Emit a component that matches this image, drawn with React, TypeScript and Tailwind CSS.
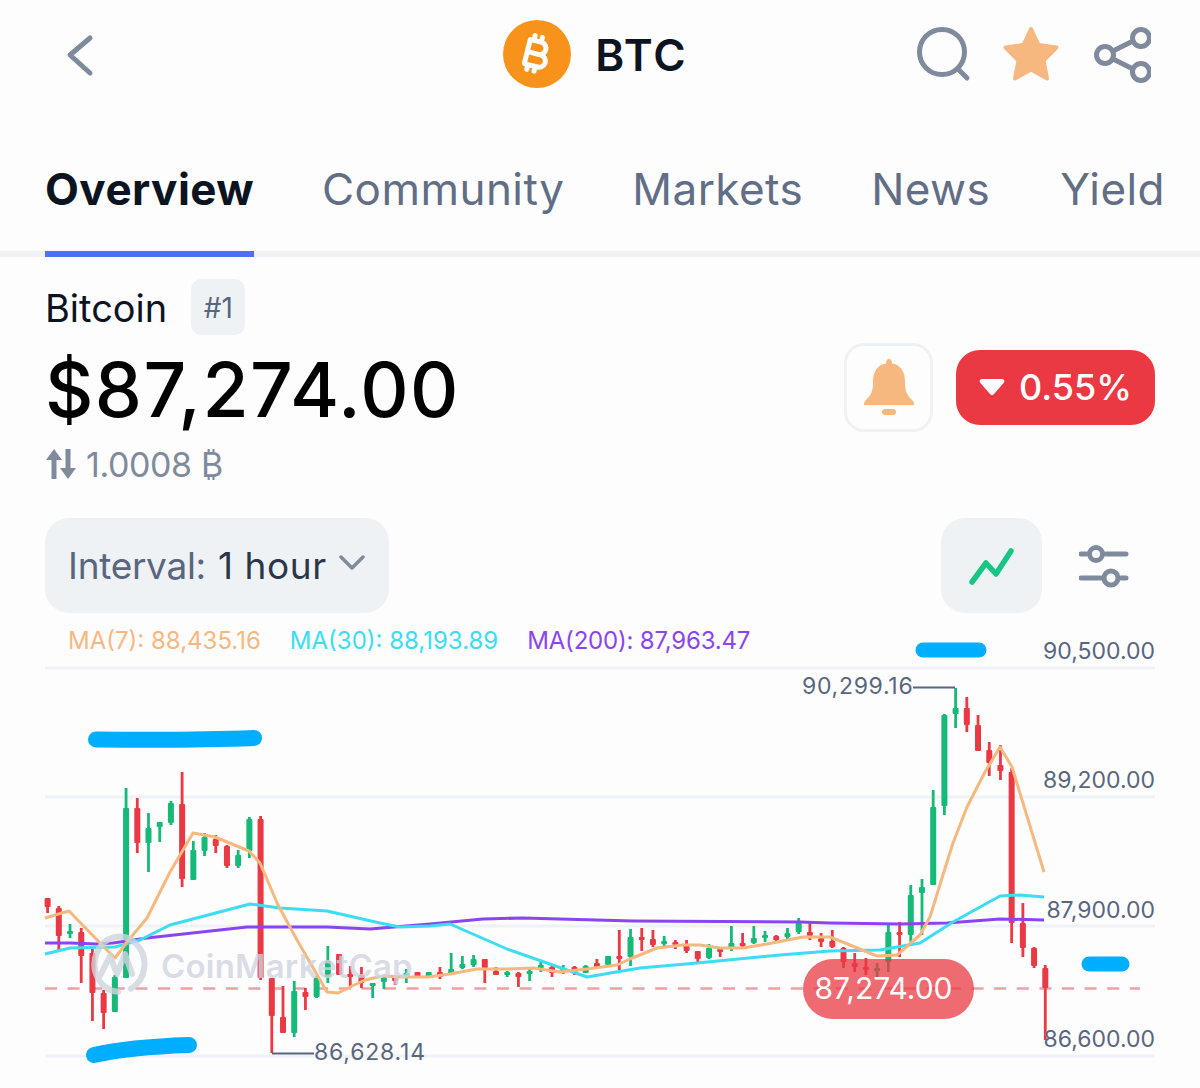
import { FaBitcoinSign } from "react-icons/fa6";

// color, wick top, body top, body bottom, wick bottom (y in page px)
type Candle = ["g" | "r", number, number, number, number];

const candles: Candle[] = [
  ["r", 898, 898, 907, 913], ["r", 906, 908, 936, 950], ["g", 924, 931, 934, 938], ["r", 928, 932, 956, 983],
  ["r", 948, 953, 993, 1021], ["r", 990, 993, 1013, 1029], ["g", 975, 977, 1012, 1012], ["g", 788, 808, 978, 978],
  ["r", 798, 808, 843, 853], ["g", 813, 828, 843, 872], ["g", 822, 822, 827, 842], ["g", 801, 803, 823, 825],
  ["r", 772, 804, 879, 887], ["g", 841, 850, 880, 880], ["g", 833, 837, 851, 856], ["r", 835, 839, 846, 853],
  ["r", 845, 846, 866, 868], ["g", 850, 855, 866, 868], ["g", 817, 819, 851, 858], ["r", 816, 819, 978, 980],
  ["r", 978, 978, 1016, 1053], ["r", 986, 1017, 1033, 1033], ["g", 981, 991, 1033, 1037], ["r", 988, 992, 997, 1010],
  ["g", 976, 978, 997, 998], ["g", 946, 961, 977, 983], ["r", 954, 954, 975, 975], ["r", 966, 974, 977, 988],
  ["r", 967, 975, 983, 988], ["g", 983, 983, 985, 998], ["g", 975, 977, 982, 989], ["r", 975, 977, 981, 985],
  ["g", 969, 973, 977, 983], ["r", 972, 972, 977, 977], ["g", 972, 972, 977, 977], ["r", 967, 972, 977, 979],
  ["g", 953, 969, 975, 975], ["g", 956, 964, 968, 969], ["g", 955, 959, 965, 967], ["r", 959, 959, 968, 983],
  ["r", 967, 971, 975, 975], ["g", 971, 972, 975, 977], ["r", 972, 973, 977, 987], ["g", 968, 971, 973, 981],
  ["g", 962, 965, 968, 972], ["r", 966, 967, 973, 977], ["g", 965, 968, 971, 974], ["r", 966, 967, 972, 975],
  ["g", 965, 966, 973, 973], ["r", 959, 963, 967, 967], ["g", 956, 956, 965, 966], ["r", 930, 956, 959, 970],
  ["g", 929, 937, 957, 966], ["r", 928, 937, 940, 951], ["r", 930, 939, 945, 947], ["g", 936, 941, 944, 947],
  ["r", 940, 942, 945, 949], ["r", 940, 946, 951, 953], ["r", 951, 951, 959, 963], ["g", 944, 948, 958, 959],
  ["r", 948, 949, 952, 957], ["g", 926, 943, 948, 951], ["r", 933, 943, 946, 948], ["g", 926, 938, 943, 944],
  ["g", 931, 935, 938, 942], ["r", 935, 936, 940, 942], ["g", 928, 933, 937, 940], ["g", 918, 923, 932, 934],
  ["r", 923, 932, 936, 940], ["r", 933, 938, 942, 947], ["r", 930, 941, 947, 948], ["r", 947, 948, 962, 968],
  ["r", 953, 963, 967, 972], ["r", 958, 967, 970, 975], ["g", 963, 968, 970, 977], ["g", 925, 932, 962, 972],
  ["r", 922, 932, 935, 957], ["g", 885, 895, 935, 942], ["g", 879, 887, 893, 935], ["g", 790, 807, 885, 885],
  ["g", 714, 715, 806, 815], ["g", 688, 708, 714, 728], ["r", 697, 708, 725, 732], ["r", 715, 725, 751, 751],
  ["r", 742, 750, 763, 776], ["r", 745, 765, 771, 780], ["r", 768, 772, 923, 943], ["r", 903, 923, 948, 957],
  ["r", 947, 948, 966, 968], ["r", 965, 968, 988, 1040],
];

const ma7 =
  "45,918 69,911 100,943 115,958 127,942 147,918 170,872 193,833 215,837 249,851 260,863 278,905 297,940 327,992 338,993 350,987 365,980 383,976 403,977 428,977 450,974 477,969 507,969 533,968 560,972 587,969 617,965 630,959 657,948 683,945 700,945 720,948 743,948 767,944 803,937 830,937 850,945 877,956 897,955 920,935 930,917 942,878 953,843 967,807 985,772 1000,747 1012,767 1044,872";
const ma30 =
  "45,954 70,948 115,947 140,940 170,925 250,904 280,908 327,911 380,923 400,927 430,926 450,924 507,949 587,977 640,968 697,963 780,955 830,951 880,950 920,943 953,922 1000,896 1020,895 1044,897";
const ma200 =
  "45,943 70,943 97,944 113,943 147,938 247,927 327,927 370,929 430,924 483,919 523,918 633,921 800,922 830,923 900,924 947,923 1000,919 1044,920";

function Chart() {
  return (
    <div className="relative h-[435px]">
      <svg width="1200" height="435" viewBox="0 653 1200 435" className="absolute inset-0 overflow-visible">
        {[668, 797, 926, 1056].map((y) => (
          <line key={y} x1="45" x2="1155" y1={y} y2={y} stroke="#eff2f5" strokeWidth="3" />
        ))}
        <line x1="45" x2="1140" y1="988.5" y2="988.5" stroke="#f19ea3" strokeWidth="2.5" strokeDasharray="12 10.6" />
        {candles.map(([c, wt, bt, bb, wb], i) => {
          const x = 47.6 + i * 11.21;
          const color = c === "g" ? "#16ba78" : "#ea3943";
          return (
            <g key={i} fill={color}>
              <rect x={x - 1.4} y={wt} width="2.8" height={wb - wt} />
              <rect x={x - 3} y={bt} width="6" height={Math.max(bb - bt, 3)} rx="1" />
            </g>
          );
        })}
        <polyline points={ma200} fill="none" stroke="#8b45f0" strokeWidth="3" strokeLinejoin="round" />
        <polyline points={ma30} fill="none" stroke="#3cdcf2" strokeWidth="3" strokeLinejoin="round" />
        <polyline points={ma7} fill="none" stroke="#f6b87e" strokeWidth="3" strokeLinejoin="round" />
        <path d="M913 687.5H955M272 1053.5H314" stroke="#58667e" strokeWidth="2" fill="none" />
        {/* watermark logo */}
        <g fill="none" stroke="#cfd4de" strokeWidth="6" opacity="0.8" strokeLinecap="round" strokeLinejoin="round">
          <path d="M137 985a25 27 0 1 0-13 3" transform="translate(-6 -16) scale(1 1.02)" />
          <path d="M100 976l10-20 7 18 8-20 7 20" />
        </g>
        {/* blue scribbles */}
        <path d="M96 739.5C150 740 205 740 254 738" stroke="#00aeff" strokeWidth="16" strokeLinecap="round" fill="none" />
        <path d="M94 1055C125 1048 160 1046 189 1045" stroke="#00aeff" strokeWidth="16" strokeLinecap="round" fill="none" />
        <path d="M923 650H979" stroke="#00aeff" strokeWidth="15" strokeLinecap="round" />
        <path d="M1089 964H1122" stroke="#00aeff" strokeWidth="15" strokeLinecap="round" />
      </svg>

      <span className="absolute left-[161px] top-[291px] text-[33px] font-semibold leading-[44px] tracking-[0.2px] text-[#cfd4de]/80">
        CoinMarketCap
      </span>
      <span className="absolute left-[802px] top-[18px] text-[23px] leading-[30px] tracking-[0.7px] text-[#58667e]">90,299.16</span>
      <span className="absolute left-[314px] top-[384px] text-[23px] leading-[30px] tracking-[0.8px] text-[#58667e]">86,628.14</span>
      {[
        ["90,500.00", "top-[-17px]"],
        ["89,200.00", "top-[112px]"],
        ["87,900.00", "top-[242px]"],
        ["86,600.00", "top-[371px]"],
      ].map(([label, pos]) => (
        <span key={label} className={`absolute right-[45px] ${pos} text-[23px] leading-[30px] text-[#58667e]`}>
          {label}
        </span>
      ))}
      <div className="absolute left-[803px] top-[306px] flex h-[60px] w-[171px] items-center justify-center rounded-[30px] bg-[#ea3943]/75 pb-[2px] pr-[10px] text-[30px] text-white">
        87,274.00
      </div>
    </div>
  );
}

export default function App() {
  return (
    <div className="h-[1088px] w-[1200px] overflow-hidden bg-[#fdfdfe] font-['Inter',sans-serif]">
      <header className="relative flex h-[110px] items-center justify-center">
        <svg width="30" height="44" viewBox="0 0 30 44" className="absolute left-[65px] top-[33px]" fill="none" stroke="#808a9d" strokeWidth="5" strokeLinecap="round" strokeLinejoin="round">
          <path d="M25 5L5 22l20 18" />
        </svg>
        <div className="mb-[2px] mr-[9px] flex items-center gap-6">
          <div className="flex size-[68px] items-center justify-center rounded-full bg-[#f7931a]">
            <FaBitcoinSign className="rotate-[14deg] text-[40px] text-white" />
          </div>
          <span className="mt-[2px] text-[44px] font-semibold leading-none tracking-[2px] text-[#0d1421]">BTC</span>
        </div>
        <div className="absolute left-[915px] top-[22px] flex items-center">
          <svg width="58" height="62" viewBox="0 0 58 62" fill="none" stroke="#808a9d" strokeWidth="5" strokeLinecap="round">
            <circle cx="27" cy="30" r="22.5" />
            <path d="M43 47l9 9" />
          </svg>
          <svg width="62" height="62" viewBox="0 0 62 62" className="ml-[28px]" fill="#f6b87e">
            <path d="M30 7l7.500 16 18 2.500-13 13 3.500 18-16-9-16 9 3.500-18-13-13 18-2.500z" stroke="#f6b87e" strokeWidth="4" strokeLinejoin="round" />
          </svg>
          <svg width="62" height="62" viewBox="0 0 62 62" className="ml-[26px]" fill="none" stroke="#808a9d" strokeWidth="5">
            <circle cx="52" cy="16" r="8.500" />
            <circle cx="16" cy="33" r="8.500" />
            <circle cx="52" cy="50" r="8.500" />
            <path d="M24 29l20-10M24 37l20 10" />
          </svg>
        </div>
      </header>

      <nav className="flex h-[147px] items-stretch border-b-[6px] border-[#eff2f5] pl-[45px] pt-[46px] text-[44px] leading-[66px] tracking-[0.45px] text-[#616e85]">
        <span className="-mb-[6px] w-[209px] border-b-[6px] border-[#4b72f5] font-bold text-[#0d1421]">Overview</span>
        <span className="ml-[68px] whitespace-nowrap">Community</span>
        <span className="ml-[68px] whitespace-nowrap">Markets</span>
        <span className="ml-[68px] whitespace-nowrap">News</span>
        <span className="ml-[70px] whitespace-nowrap">Yield</span>
      </nav>

      <section className="px-[45px]">
        <div className="mt-[22px] flex h-[56px] items-center gap-[24px]">
          <span className="mt-[2px] text-[38px] leading-none text-[#0d1421]">Bitcoin</span>
          <span className="flex h-[56px] w-[54px] items-center justify-center rounded-[10px] bg-[#eff2f5] pt-[2px] text-[28px] text-[#58667e]">#1</span>
        </div>
        <div className="mt-[10px] flex items-center justify-between">
          <span className="text-[75px] font-medium leading-[90px] tracking-[1.4px] text-black">$87,274.00</span>
          <div className="-mt-[6px] flex items-center gap-[23px]">
            <div className="flex size-[89px] items-center justify-center rounded-[20px] border-[3px] border-[#eff2f5]">
              <svg width="54" height="60" viewBox="0 0 54 60" fill="#f6b87e">
                <path d="M27 2c2 0 3 1.500 3 4.500C39 8 43 15 43 25c0 9 2 13 6 17 2 2 3 3 3 5v1H2v-1c0-2 1-3 3-5 4-4 6-8 6-17 0-10 4-17 13-18.500C24 3.500 25 2 27 2z" />
                <rect x="20" y="52" width="14" height="6" rx="3" />
              </svg>
            </div>
            <div className="flex h-[75px] w-[199px] items-center justify-center gap-[14px] rounded-[24px] bg-[#ea3943] text-[36px] font-medium text-white">
              <svg width="26" height="18" viewBox="0 0 26 18" fill="white">
                <path d="M3 1h20c2 0 3 2 2 3.500L15 16c-1 1.500-3 1.500-4 0L1 4.500C0 3 1 1 3 1z" />
              </svg>
              0.55%
            </div>
          </div>
        </div>
        <div className="mt-[7px] flex h-[44px] items-center gap-[9px] text-[34px] tracking-[-0.4px] text-[#808a9d]">
          <svg width="32" height="32" viewBox="0 0 32 32" fill="#808a9d">
            <path d="M9 1L1 12h5.500v19h5V12H17zM23 31l8-11h-5.500V1h-5v19H15z" />
          </svg>
          <span>1.0008 ₿</span>
        </div>

        <div className="mt-[32px] flex items-center">
          <div className="flex h-[95px] w-[344px] items-center rounded-[24px] bg-[#eff2f5] pl-[23px] text-[37px] text-[#58667e]">
            <span className="tracking-[-0.3px]">Interval:</span>
            <span className="ml-[12px] tracking-[0.6px] text-[#2b3648]">1 hour</span>
            <svg width="26" height="16" viewBox="0 0 26 16" className="mb-[6px] ml-[12px]" fill="none" stroke="#808a9d" strokeWidth="3.500" strokeLinecap="round" strokeLinejoin="round">
              <path d="M2 2l11 11L24 2" />
            </svg>
          </div>
          <div className="ml-auto flex h-[95px] w-[101px] items-center justify-center rounded-[24px] bg-[#eff2f5]">
            <svg width="46" height="40" viewBox="0 0 46 40" fill="none" stroke="#16c784" strokeWidth="5.500" strokeLinecap="round" strokeLinejoin="round">
              <path d="M3 36l14-19 10 11L42 5" />
            </svg>
          </div>
          <svg width="50" height="44" viewBox="0 0 50 44" className="ml-[37px] mr-[26px]" fill="none" stroke="#808a9d" strokeWidth="5" strokeLinecap="round">
            <circle cx="17" cy="10" r="6.500" />
            <path d="M2 10h5M27 10h20M2 34h20M42 34h5" />
            <circle cx="32" cy="34" r="7" />
          </svg>
        </div>
      </section>

      <div className="mt-[15px] flex h-[26px] items-center pl-[68px] text-[24px] leading-none">
        <span className="text-[#f6b87e]">MA(7): 88,435.16</span>
        <span className="ml-[29px] text-[#3cdcf2]">MA(30): 88,193.89</span>
        <span className="ml-[29px] tracking-[-0.2px] text-[#8b45f0]">MA(200): 87,963.47</span>
      </div>
      <div className="-mt-[1px]">
        <Chart />
      </div>
    </div>
  );
}
